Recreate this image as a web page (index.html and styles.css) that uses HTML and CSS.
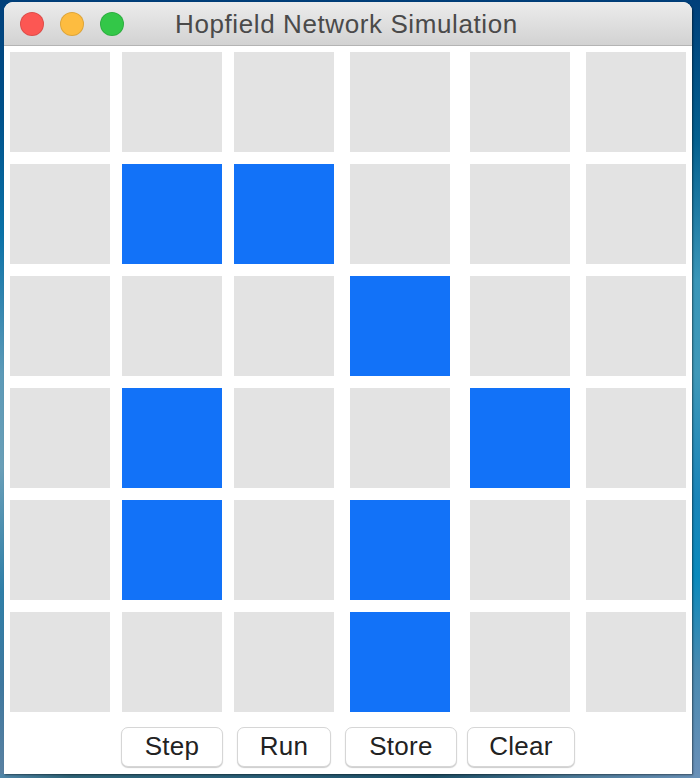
FILE: index.html
```html
<!DOCTYPE html>
<html>
<head>
  <title>Hopfield Network Simulation</title>
  <link rel="stylesheet" href="styles.css">
</head>
<body>
  <div class="window">
    <div class="titlebar">
      <div class="lights">
        <span class="light red"></span>
        <span class="light yellow"></span>
        <span class="light green"></span>
      </div>
      <div class="title">Hopfield Network Simulation</div>
    </div>
    <div class="content">
      <div class="grid">
        <div class="cell"></div><div class="cell"></div><div class="cell"></div><div class="cell"></div><div class="cell"></div><div class="cell"></div>
        <div class="cell"></div><div class="cell on"></div><div class="cell on"></div><div class="cell"></div><div class="cell"></div><div class="cell"></div>
        <div class="cell"></div><div class="cell"></div><div class="cell"></div><div class="cell on"></div><div class="cell"></div><div class="cell"></div>
        <div class="cell"></div><div class="cell on"></div><div class="cell"></div><div class="cell"></div><div class="cell on"></div><div class="cell"></div>
        <div class="cell"></div><div class="cell on"></div><div class="cell"></div><div class="cell on"></div><div class="cell"></div><div class="cell"></div>
        <div class="cell"></div><div class="cell"></div><div class="cell"></div><div class="cell on"></div><div class="cell"></div><div class="cell"></div>
      </div>
      <div class="buttons">
        <button class="btn btn-step">Step</button>
        <button class="btn btn-run">Run</button>
        <button class="btn btn-store">Store</button>
        <button class="btn btn-clear">Clear</button>
      </div>
    </div>
  </div>
</body>
</html>
```

FILE: styles.css
```css
html, body {
  margin: 0;
  height: 100%;
}
body {
  width: 700px;
  height: 778px;
  overflow: hidden;
  box-sizing: border-box;
  padding: 2px 8px 4px 4px;
  font-family: "Liberation Sans", Arial, sans-serif;
  background:
    linear-gradient(90deg, #4f86a8 0%, #2f6478 10%, #2a5f78 40%, #1d4f66 62%, #4c7a98 82%, #6a92b8 100%) bottom / 100% 4px no-repeat,
    linear-gradient(180deg, #003f7a 0%, #00528c 15%, #0a72a8 30%, #5c9ab8 48%, #6a9fb8 60%, #2f7fa8 76%, #3f789f 88%, #5b82a2 100%) left / 50% 100% no-repeat,
    linear-gradient(180deg, #003f7a 0%, #04608f 18%, #3a96b8 36%, #3f98b8 48%, #1a84b8 64%, #0a8abc 74%, #4a8ab0 86%, #6a90b8 100%) right / 50% 100% no-repeat;
}
.window {
  width: 688px;
  height: 772px;
  background: #fff;
  border-radius: 9px 9px 0 0;
  overflow: hidden;
  box-shadow: 1px 1px 2px rgba(0, 0, 0, 0.45);
}
.titlebar {
  height: 44px;
  box-sizing: border-box;
  display: flex;
  align-items: center;
  padding-left: 16px;
  background: linear-gradient(180deg, #ececec 0%, #d2d2d2 100%);
  border-bottom: 1px solid #b4b4b4;
}
.lights {
  display: flex;
  gap: 16px;
}
.light {
  width: 24px;
  height: 24px;
  box-sizing: border-box;
  border-radius: 50%;
  border: 1px solid rgba(0, 0, 0, 0.12);
}
.red { background: #fc5753; }
.yellow { background: #fdbc40; }
.green { background: #33c748; }
.title {
  margin-left: 51px;
  padding-top: 2px;
  font-size: 26px;
  letter-spacing: 0.6px;
  color: #4a4a4a;
}
.content {
  padding: 6px 6px 0;
}
.grid {
  display: grid;
  grid-template-columns: 112px 112px 116px 120px 116px 100px;
  grid-auto-rows: 100px;
  row-gap: 12px;
}
.cell {
  width: 100px;
  background: #e3e3e3;
}
.on {
  background: #1272f8;
}
.buttons {
  display: flex;
  justify-content: center;
  gap: 14px;
  margin-top: 15px;
}
.btn {
  height: 40px;
  padding: 0 0 2px;
  font-family: "Liberation Sans", Arial, sans-serif;
  font-size: 26px;
  letter-spacing: 0.3px;
  color: #222;
  background: #fff;
  border: 1px solid #d6d6d6;
  border-radius: 7px;
  box-shadow: 0 1px 1px rgba(0, 0, 0, 0.2);
}
.btn-step { width: 102px; }
.btn-run { width: 94px; }
.btn-store { width: 112px; }
.btn-clear { width: 108px; margin-left: -4px; }
```
